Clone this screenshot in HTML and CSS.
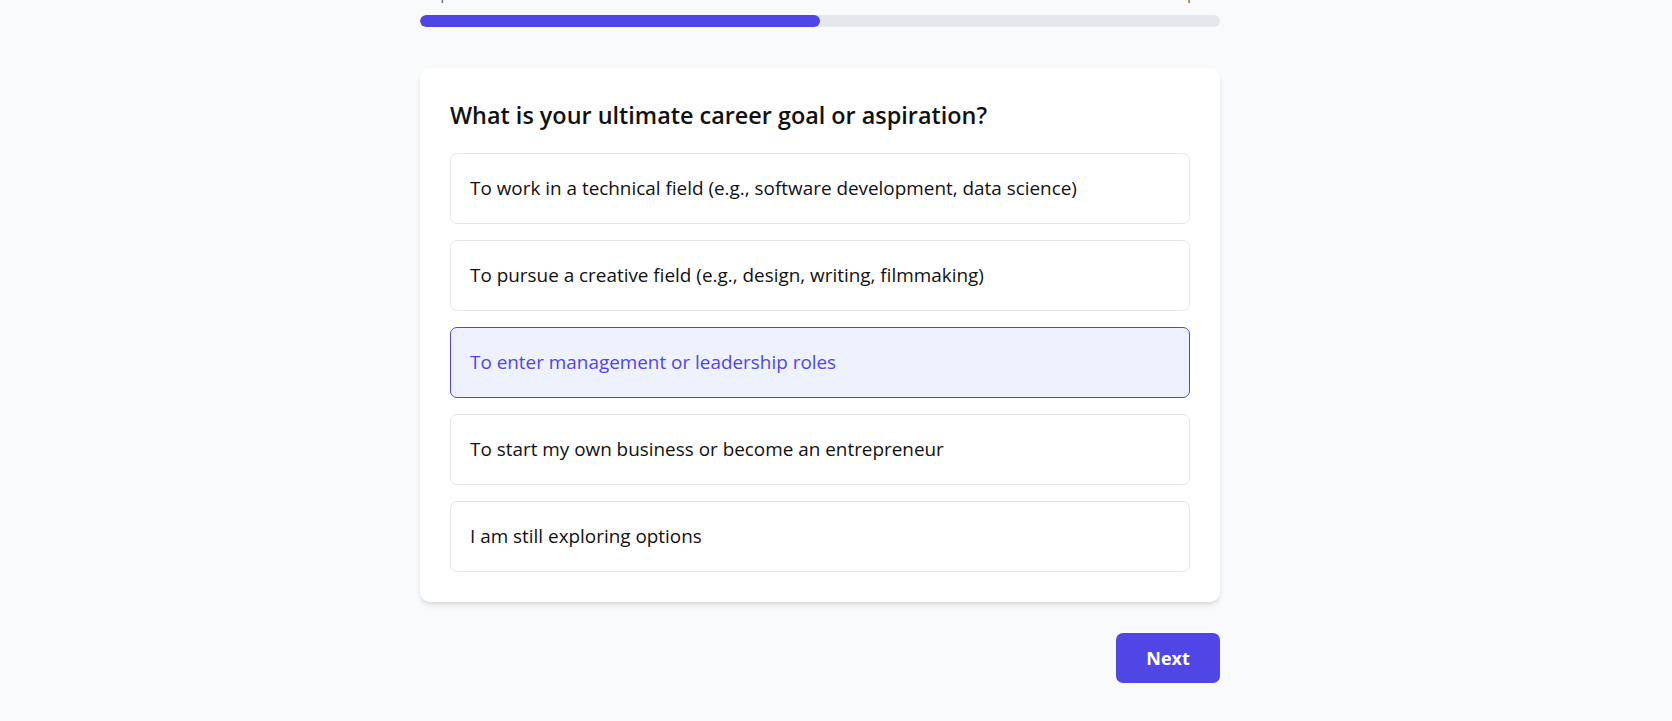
FILE: index.html
```html
<!DOCTYPE html>
<html lang="en">
<head>
<meta charset="utf-8">
<title>Career Quiz</title>
<link rel="stylesheet" href="styles.css">
</head>
<body>
<main class="quiz">
  <div class="progress">
    <div class="progress-labels">
      <span>Step 3 of 6</span>
      <span>50% Complete</span>
    </div>
    <div class="progress-track">
      <div class="progress-fill" style="width: 50%"></div>
    </div>
  </div>

  <section class="card">
    <h2 class="question">What is your ultimate career goal or aspiration?</h2>
    <div class="options">
      <button class="option">To work in a technical field (e.g., software development, data science)</button>
      <button class="option">To pursue a creative field (e.g., design, writing, filmmaking)</button>
      <button class="option selected">To enter management or leadership roles</button>
      <button class="option">To start my own business or become an entrepreneur</button>
      <button class="option">I am still exploring options</button>
    </div>
  </section>

  <div class="actions">
    <button class="next">Next</button>
  </div>
</main>
</body>
</html>
```

FILE: styles.css
```css
* { box-sizing: border-box; }

html, body {
  margin: 0;
  padding: 0;
  background: #f9fafb;
  font-family: "Open Sans", "Noto Sans", sans-serif;
  color: #111827;
}

body {
  padding-right: 32px;
}

.quiz {
  width: 800px;
  margin: -16px auto 0;
}

.progress-labels {
  display: flex;
  justify-content: space-between;
  font-size: 14px;
  line-height: 20px;
  color: #4b5563;
  margin-bottom: 11px;
}

.progress-track {
  height: 12px;
  background: #e5e7eb;
  border-radius: 6px;
  overflow: hidden;
}

.progress-fill {
  height: 100%;
  background: #4f46e5;
  border-radius: 6px;
}

.card {
  margin-top: 41px;
  background: #ffffff;
  border-radius: 10px;
  padding: 30px;
  box-shadow: 0 4px 6px -1px rgba(0,0,0,0.1), 0 2px 4px -2px rgba(0,0,0,0.1);
}

.question {
  margin: 0 0 22px;
  padding-top: 1px;
  font-size: 23.4px;
  line-height: 32px;
  font-weight: 600;
  color: #111111;
}

.options {
  display: flex;
  flex-direction: column;
  gap: 16px;
}

.option {
  display: block;
  width: 100%;
  text-align: left;
  font-family: inherit;
  font-size: 18.9px;
  line-height: 29px;
  padding: 20px 19px;
  background: #ffffff;
  border: 1px solid #e5e7eb;
  border-radius: 7px;
  color: #111111;
  cursor: pointer;
}

.option.selected {
  background: #eef2ff;
  border-color: #4f46e5;
  color: #4f46e5;
}

.actions {
  display: flex;
  justify-content: flex-end;
  margin-top: 31px;
}

.next {
  width: 104px;
  height: 50px;
  background: #4f46e5;
  color: #ffffff;
  border: none;
  border-radius: 7px;
  font-family: inherit;
  font-size: 18px;
  font-weight: 700;
  cursor: pointer;
}
```
